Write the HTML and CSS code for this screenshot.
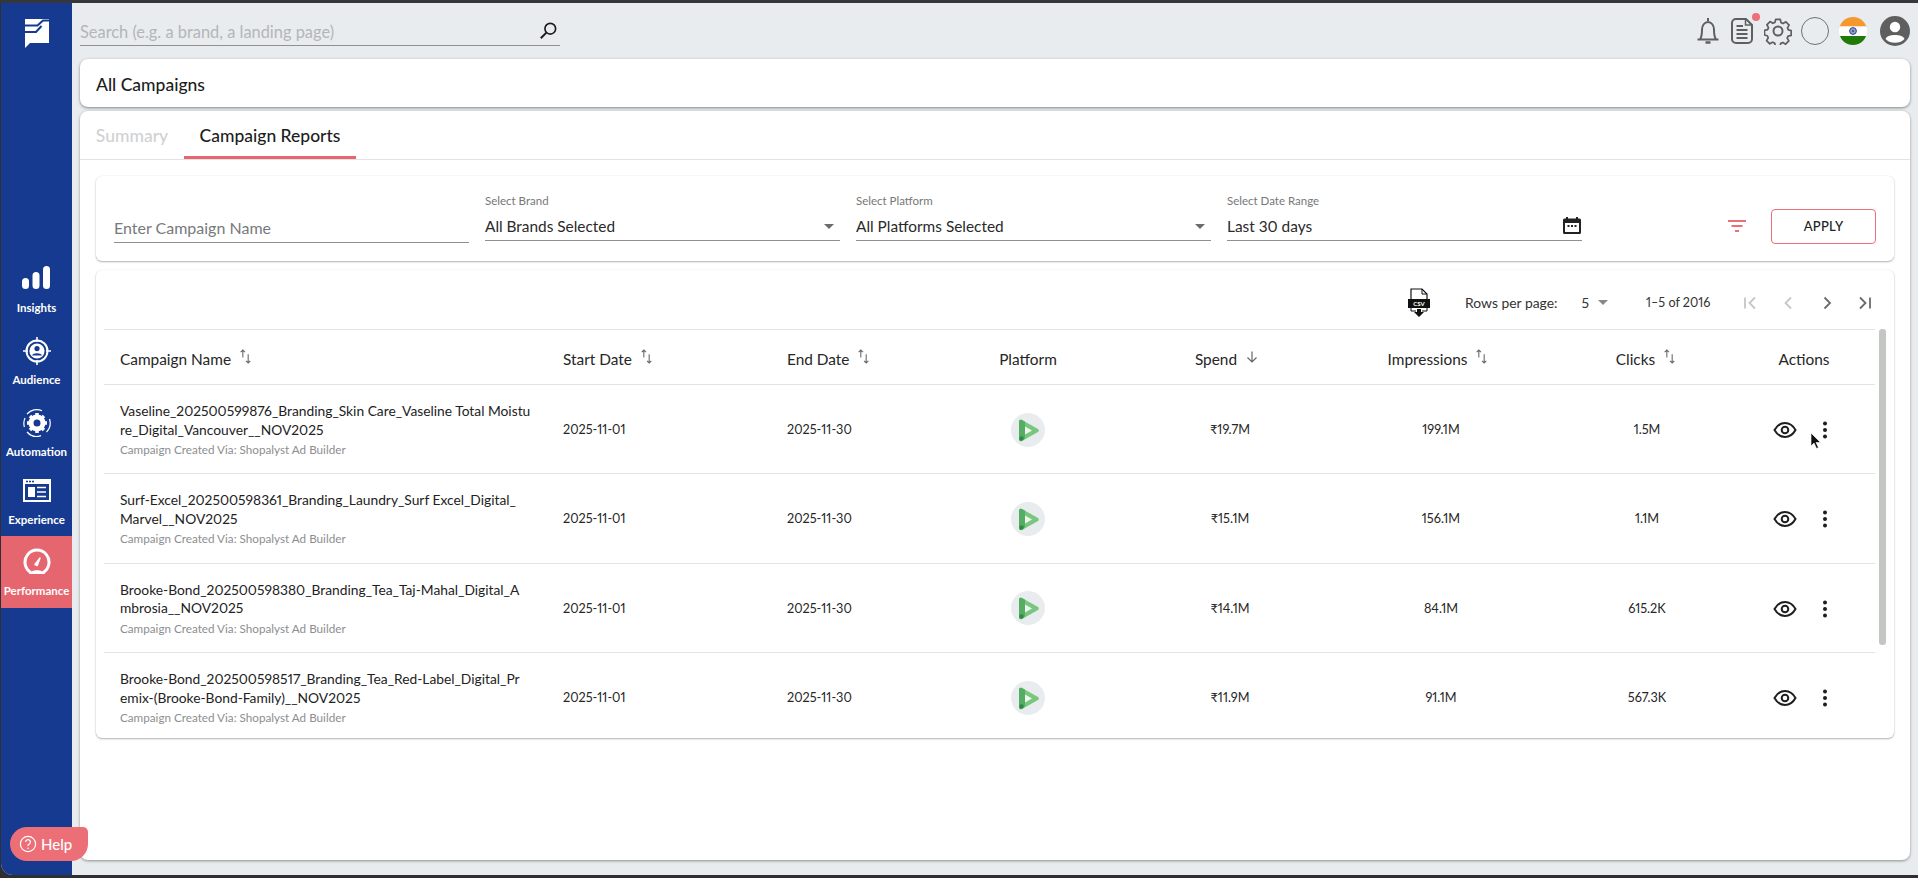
FILE: index.html
```html
<!DOCTYPE html>
<html lang="en">
<head>
<meta charset="utf-8">
<title>All Campaigns</title>
<link rel="stylesheet" href="styles.css">
</head>
<body>
<div class="titlebar"></div>
<div class="app">
  <aside class="sidebar">
    <svg class="logo" viewBox="0 0 24 29" width="24" height="29"><path fill="#fff" d="M0 0H24V24H5L0 29Z"/><path fill="none" stroke="#163a8f" stroke-width="2" d="M0 6.500H12.500L18 1.500H24M0 13H11L16.500 7"/></svg>
    <nav class="nav">
      <a class="nav-item ins">
        <svg viewBox="0 0 30 26" width="30" height="26"><rect x="1" y="12" width="7" height="11" rx="3.5" fill="#fff"/><rect x="11.5" y="6" width="7" height="17" rx="3.5" fill="#fff"/><rect x="22" y="0" width="7" height="23" rx="3.5" fill="#fff"/></svg>
        <span>Insights</span>
      </a>
      <a class="nav-item">
        <svg viewBox="0 0 28 28" width="28" height="28" fill="none" stroke="#fff"><circle cx="14" cy="14" r="10.5" stroke-width="2"/><circle cx="14" cy="14" r="7.6" fill="#fff" stroke="none"/><circle cx="14" cy="11.6" r="2.6" fill="#163a8f" stroke="none"/><path d="M9 18.5c1-3 9-3 10 0z" fill="#163a8f" stroke="none"/><path d="M14 0v5M14 23v5M0 14h5M23 14h5" stroke-width="1.6"/></svg>
        <span>Audience</span>
      </a>
      <a class="nav-item">
        <svg viewBox="0 0 30 30" width="30" height="30" fill="none" stroke="#fff"><path d="M5 6A13 13 0 0 1 20 2.8M27.5 11A13 13 0 0 1 24.500 24M19 27.600A13 13 0 0 1 5 24M2.400 19A13 13 0 0 1 3 10" stroke-width="1.200"/><circle cx="15" cy="15" r="6" stroke-width="5"/><path d="M15 5v4M15 21v4M5 15h4M21 15h4M8 8l3 3M19 19l3 3M22 8l-3 3M8 22l3-3" stroke-width="3.400"/></svg>
        <span>Automation</span>
      </a>
      <a class="nav-item short">
        <svg viewBox="0 0 28 24" width="28" height="24"><path fill="#fff" fill-rule="evenodd" d="M0 0H28V23H0ZM2 5V21H26V5Z"/><rect x="5" y="8" width="7" height="10" fill="#fff"/><path d="M14 8.500H23M14 13H23M14 17.500H23" stroke="#fff" stroke-width="1.500"/><path d="M3 2.500H5M6 2.500H8M9 2.500H11" stroke="#163a8f" stroke-width="1.500"/></svg>
        <span>Experience</span>
      </a>
      <a class="nav-item active">
        <svg viewBox="0 0 28 28" width="28" height="28" fill="none"><path d="M8 24.500A12 12 0 1 1 20 24.500" stroke="#fff" stroke-width="3"/><path d="M6 26c2-5 14-5 16 0z" fill="#fff"/><path d="M12 16.500l5-6.500-2.800 7.500z" fill="#fff" stroke="#fff" stroke-width="1.500" stroke-linejoin="round"/></svg>
        <span>Performance</span>
      </a>
    </nav>
  </aside>
  <main class="main">
    <header class="topbar">
      <div class="search">
        <span class="search-text">Search (e.g. a brand, a landing page)</span>
        <svg viewBox="0 0 16 16" width="19" height="19" fill="none" stroke="#1b1b1b"><circle cx="9.500" cy="6.500" r="4.500" stroke-width="1.400"/><path d="M6.200 9.800L1.500 14.500" stroke-width="1.700"/></svg>
      </div>
      <div class="top-icons">
        <svg class="ic-bell" viewBox="0 0 24 28" width="24" height="28" fill="none" stroke="#5f5f5f" stroke-width="2"><path d="M1.500 22.500h21M4 22.500c2-3 2-5 2-10 0-4 2.500-7.500 6-7.500s6 3.500 6 7.500c0 5 0 7 2 10"/><path d="M12 1v3"/><path d="M9.500 25.500h5" stroke-width="2.400"/></svg>
        <span class="doc-wrap">
          <svg viewBox="0 0 22 26" width="22" height="26" fill="none" stroke="#5f5f5f" stroke-width="2"><path d="M5 1h10l6 6v14a4 4 0 0 1-4 4H5a4 4 0 0 1-4-4V5a4 4 0 0 1 4-4z"/><path d="M5.500 8H12M5.500 12h11M5.500 16h11M5.500 20h11" stroke-width="1.800"/><path d="M14.500 1.500V7H20" stroke-width="1.500"/></svg>
          <i class="dot"></i>
        </span>
        <svg class="gear" viewBox="0 0 28 28" width="28" height="28" fill="none" stroke="#5f5f5f"><circle cx="14" cy="14" r="4.500" stroke-width="2"/><path stroke-width="1.900" stroke-linejoin="round" d="M11.500 1.500h5l.8 3.400 2.300 1 3-1.800 3.500 3.500-1.800 3 1 2.300 3.100.8v5l-3.400.8-1 2.300 1.800 3-3.500 3.500-3-1.800-2.300 1-.8 3.100h-5l-.8-3.400-2.300-1-3 1.800-3.500-3.500 1.800-3-1-2.300-3.100-.8v-5l3.400-.8 1-2.300-1.800-3 3.500-3.500 3 1.800 2.300-1z" transform="translate(1.100 1.100) scale(.92)"/></svg>
        <span class="lang-empty"></span>
        <svg class="flag" viewBox="0 0 28 28" width="28" height="28"><clipPath id="fc"><circle cx="14" cy="14" r="14"/></clipPath><g clip-path="url(#fc)"><rect width="28" height="9.500" fill="#f7982f"/><rect y="9.500" width="28" height="9.500" fill="#fff"/><rect y="19" width="28" height="9" fill="#1f7a0a"/></g><circle cx="14" cy="14" r="3.400" fill="#8ea0c8" stroke="#2d4a8f" stroke-width="1"/><circle cx="14" cy="14" r="1" fill="#2d4a8f"/></svg>
        <svg class="avatar" viewBox="0 0 30 30" width="30" height="30"><circle cx="15" cy="15" r="15" fill="#5f5f5f"/><circle cx="15" cy="11" r="5.200" fill="#fff"/><path d="M5.500 23c1.500-5.500 17.500-5.500 19 0-2.500 2.800-6 3.800-9.500 3.800s-7-1-9.500-3.800z" fill="#fff"/></svg>
      </div>
    </header>

    <section class="title-card">All Campaigns</section>

    <section class="content-card">
      <div class="tabs">
        <span class="tab muted">Summary</span>
        <span class="tab current">Campaign Reports</span>
      </div>

      <div class="filters">
        <div class="field plain"><span class="placeholder">Enter Campaign Name</span></div>
        <div class="field">
          <label>Select Brand</label>
          <div class="value">All Brands Selected<i class="caret"></i></div>
        </div>
        <div class="field">
          <label>Select Platform</label>
          <div class="value">All Platforms Selected<i class="caret"></i></div>
        </div>
        <div class="field">
          <label>Select Date Range</label>
          <div class="value">Last 30 days
            <svg viewBox="0 0 18 18" width="18" height="18"><path fill="#222" fill-rule="evenodd" d="M3 1h2v1.500h8V1h2v1.500h1.500A1.500 1.500 0 0 1 18 4v12.500a1.500 1.500 0 0 1-1.500 1.500h-15A1.500 1.500 0 0 1 0 16.500V4a1.500 1.500 0 0 1 1.500-1.500H3ZM2 7v9h14V7Z"/><path fill="#222" d="M4.500 9h2v2h-2zM8 9h2v2H8zM11.500 9h2v2h-2z"/></svg>
          </div>
        </div>
        <div class="filter-actions">
          <svg viewBox="0 0 18 12" width="18" height="12"><path d="M0 1h18M3.500 6h11M7 11h4" stroke="#ec6f78" stroke-width="2"/></svg>
          <button class="apply">APPLY</button>
        </div>
      </div>

      <div class="table-card">
        <div class="pager">
          <svg class="csv" viewBox="0 0 22 30" width="22" height="30"><path d="M3 12V1h11l5 5v6" fill="#fff" stroke="#111" stroke-width="1.200"/><path d="M14 1v5h5" fill="none" stroke="#111" stroke-width="1"/><rect x="0" y="11" width="22" height="9" fill="#111"/><text x="11" y="18" class="csv-text">CSV</text><path d="M3 20v3h5M19 20v3h-5" fill="none" stroke="#111" stroke-width="1"/><path d="M9 21h4v3h3l-5 5-5-5h3z" fill="#111"/></svg>
          <span class="rows-label">Rows per page:</span>
          <span class="rows-value">5</span><i class="caret grey"></i>
          <span class="range">1–5 of 2016</span>
          <span class="pg-btns">
            <svg viewBox="0 0 24 24" width="24" height="24" fill="none" stroke="#c4c6c8" stroke-width="1.800"><path d="M7 6.500v11M17 6.500L11.500 12l5.500 5.500"/></svg>
            <svg viewBox="0 0 24 24" width="24" height="24" fill="none" stroke="#c4c6c8" stroke-width="1.800"><path d="M15 6.500L9.500 12l5.500 5.500"/></svg>
            <svg viewBox="0 0 24 24" width="24" height="24" fill="none" stroke="#6b6b6b" stroke-width="1.800"><path d="M9.500 6.500L15 12l-5.500 5.500"/></svg>
            <svg viewBox="0 0 24 24" width="24" height="24" fill="none" stroke="#6b6b6b" stroke-width="1.800"><path d="M17 6.500v11M7 6.500l5.500 5.500L7 17.500"/></svg>
          </span>
        </div>
        <div class="table-wrap">
          <table class="report">
            <colgroup><col class="c-name"><col class="c-start"><col class="c-end"><col class="c-plat"><col class="c-spend"><col class="c-imp"><col class="c-clicks"><col class="c-act"></colgroup>
            <thead>
              <tr>
                <th class="left">Campaign Name<svg class="sort" viewBox="0 0 12 14" width="13" height="15"><use href="#sort-icon"/></svg></th>
                <th class="left">Start Date<svg class="sort" viewBox="0 0 12 14" width="13" height="15"><use href="#sort-icon"/></svg></th>
                <th class="left">End Date<svg class="sort" viewBox="0 0 12 14" width="13" height="15"><use href="#sort-icon"/></svg></th>
                <th>Platform</th>
                <th class="h-spend">Spend<svg class="sort down" viewBox="0 0 14 14" width="14" height="14" fill="none" stroke="#666" stroke-width="1.200"><path d="M7 1.500v10M2.500 7.500l4.500 4.500 4.500-4.500"/></svg></th>
                <th class="h-imp">Impressions<svg class="sort" viewBox="0 0 12 14" width="13" height="15"><use href="#sort-icon"/></svg></th>
                <th class="h-clicks">Clicks<svg class="sort" viewBox="0 0 12 14" width="13" height="15"><use href="#sort-icon"/></svg></th>
                <th class="h-act">Actions</th>
              </tr>
            </thead>
            <tbody>
              <tr>
                <td class="left"><div class="cname">Vaseline_202500599876_Branding_Skin Care_Vaseline Total Moistu<br>re_Digital_Vancouver__NOV2025</div><div class="via">Campaign Created Via: Shopalyst Ad Builder</div></td>
                <td class="left">2025-11-01</td><td class="left">2025-11-30</td>
                <td><svg class="plat" viewBox="0 0 34 34" width="34" height="34"><use href="#dv360"/></svg></td>
                <td>₹19.7M</td><td>199.1M</td><td>1.5M</td>
                <td class="d-act"><span class="acts"><svg viewBox="0 0 24 24" width="24" height="24"><use href="#eye"/></svg><svg viewBox="0 0 24 24" width="24" height="24"><use href="#dots"/></svg></span></td>
              </tr>
              <tr>
                <td class="left"><div class="cname">Surf-Excel_202500598361_Branding_Laundry_Surf Excel_Digital_<br>Marvel__NOV2025</div><div class="via">Campaign Created Via: Shopalyst Ad Builder</div></td>
                <td class="left">2025-11-01</td><td class="left">2025-11-30</td>
                <td><svg class="plat" viewBox="0 0 34 34" width="34" height="34"><use href="#dv360"/></svg></td>
                <td>₹15.1M</td><td>156.1M</td><td>1.1M</td>
                <td class="d-act"><span class="acts"><svg viewBox="0 0 24 24" width="24" height="24"><use href="#eye"/></svg><svg viewBox="0 0 24 24" width="24" height="24"><use href="#dots"/></svg></span></td>
              </tr>
              <tr>
                <td class="left"><div class="cname">Brooke-Bond_202500598380_Branding_Tea_Taj-Mahal_Digital_A<br>mbrosia__NOV2025</div><div class="via">Campaign Created Via: Shopalyst Ad Builder</div></td>
                <td class="left">2025-11-01</td><td class="left">2025-11-30</td>
                <td><svg class="plat" viewBox="0 0 34 34" width="34" height="34"><use href="#dv360"/></svg></td>
                <td>₹14.1M</td><td>84.1M</td><td>615.2K</td>
                <td class="d-act"><span class="acts"><svg viewBox="0 0 24 24" width="24" height="24"><use href="#eye"/></svg><svg viewBox="0 0 24 24" width="24" height="24"><use href="#dots"/></svg></span></td>
              </tr>
              <tr>
                <td class="left"><div class="cname">Brooke-Bond_202500598517_Branding_Tea_Red-Label_Digital_Pr<br>emix-(Brooke-Bond-Family)__NOV2025</div><div class="via">Campaign Created Via: Shopalyst Ad Builder</div></td>
                <td class="left">2025-11-01</td><td class="left">2025-11-30</td>
                <td><svg class="plat" viewBox="0 0 34 34" width="34" height="34"><use href="#dv360"/></svg></td>
                <td>₹11.9M</td><td>91.1M</td><td>567.3K</td>
                <td class="d-act"><span class="acts"><svg viewBox="0 0 24 24" width="24" height="24"><use href="#eye"/></svg><svg viewBox="0 0 24 24" width="24" height="24"><use href="#dots"/></svg></span></td>
              </tr>
            </tbody>
          </table>
          <div class="scroll-thumb"></div>
        </div>
      </div>
    </section>
  </main>
</div>

<button class="help">
  <svg viewBox="0 0 18 18" width="18" height="18" fill="none" stroke="#fff"><circle cx="9" cy="9" r="7.600" stroke-width="1.200"/><path d="M6.600 7a2.400 2.400 0 1 1 3.600 2.100c-.8.500-1.200.9-1.200 1.900" stroke-width="1.200"/><circle cx="9" cy="13.200" r=".8" fill="#fff" stroke="none"/></svg>
  Help
</button>
<svg class="cursor" viewBox="0 0 12 18" width="12" height="18"><path d="M1 1v13l3-3 2.500 5.500 2-1L6 10.500h4.500z" fill="#111" stroke="#fff" stroke-width=".6"/></svg>

<svg class="defs" width="0" height="0">
  <defs>
    <g id="sort-icon" fill="none" stroke="#666" stroke-width="1"><path d="M3.500 1v7M1.500 3l2-2 2 2"/><path d="M8.500 5v8M6.500 11l2 2 2-2"/></g>
    <g id="dv360"><circle cx="17" cy="17" r="17" fill="#e9ecee"/><path d="M8 8.500c0-1.500 1.500-2.200 3-1.500l16 9c1.200.8 1.200 2.200 0 3l-16 9c-1.500.7-3 0-3-1.500z" fill="#79c77f"/><path d="M14 13.500v8l7-4z" fill="#f1f5f1"/><path d="M8 8.500c0-1.500 1.500-2.200 3-1.500l3 1.700v16.500l-3 2.300c-1.500.7-3 0-3-1.500z" fill="#54ad62"/><circle cx="10.500" cy="25.500" r="2.200" fill="#2e8a46"/></g>
    <g id="eye" fill="none" stroke="#1e1e1e" stroke-width="2"><path d="M1.500 12C4 7.500 7.800 5 12 5s8 2.500 10.500 7c-2.500 4.500-6.300 7-10.500 7s-8-2.500-10.500-7z"/><circle cx="12" cy="12" r="3.300"/></g>
    <g id="dots" fill="#1e1e1e"><circle cx="12" cy="5.500" r="2"/><circle cx="12" cy="12" r="2"/><circle cx="12" cy="18.500" r="2"/></g>
  </defs>
</svg>
</body>
</html>
```
FILE: styles.css
```css
* { box-sizing: border-box; }
html, body { margin: 0; padding: 0; height: 100%; overflow: hidden; }
body {
  background: #2d2f33;
  font-family: "Lato", "Noto Sans", sans-serif;
  font-variant-numeric: proportional-nums;
  color: #1d1d1d;
  position: relative;
}
.titlebar { height: 3px; background: #35373b; }
.app {
  display: flex;
  height: 872px;
  margin-left: 1px;
  background: #e9ecee;
  border-radius: 0 0 0 12px;
  overflow: hidden;
}
.sidebar {
  width: 71px;
  flex: none;
  background: #163a8f;
  display: flex;
  flex-direction: column;
  align-items: center;
  padding-top: 16px;
}
.logo { margin-left: 1px; }
.nav { margin-top: 216px; width: 100%; display: flex; flex-direction: column; }
.nav-item {
  height: 72px;
  display: flex;
  flex-direction: column;
  align-items: center;
  justify-content: flex-start;
  color: #fff;
  font-size: 11.500px;
  font-weight: 700;
  gap: 7px;
  padding-top: 0;
}
.nav-item svg { height: 30px; flex: none; }
.nav-item.ins svg { margin-left: -2px; }
.nav-item.short { height: 60px; margin-top: -4px; }
.nav-item.active { background: #e5666e; height: 72px; padding-top: 11px; }
.main {
  flex: 1;
  min-width: 0;
  padding: 0 8px 0 8px;
  display: flex;
  flex-direction: column;
}
.topbar {
  height: 56px;
  flex: none;
  display: flex;
  justify-content: space-between;
  align-items: flex-start;
}
.search {
  width: 480px;
  height: 43px;
  border-bottom: 1px solid #8f9193;
  display: flex;
  align-items: center;
  justify-content: space-between;
  padding: 16px 0 0;
  margin-top: 0;
}
.search svg { margin: -3px 2px 0 0; }
.search-text { font-size: 16.400px; line-height: 20px; color: #b3b6b8; }
.top-icons { display: flex; align-items: center; gap: 10px; margin-top: 13px; padding-right: 0; }
.top-icons > svg, .doc-wrap { flex: none; }
.doc-wrap { position: relative; display: block; height: 26px; width: 22px; margin-left: 1px; }
.gear { margin: 0 -1px 0 1px; }
.avatar { margin-left: 3px; }
.dot { position: absolute; right: -7px; top: -5px; width: 8px; height: 8px; border-radius: 50%; background: #ee6e78; }
.lang-empty { width: 28px; height: 28px; border: 1px solid #6f7173; border-radius: 50%; }
.title-card {
  height: 48px;
  flex: none;
  background: #fff;
  border-radius: 8px;
  box-shadow: 0 1px 3px rgba(0,0,0,.45);
  font-size: 17.500px;
  font-weight: 500;
  display: flex;
  align-items: center;
  padding: 2px 0 0 16px;
}
.content-card {
  margin-top: 4px;
  height: 749px;
  flex: none;
  background: #fff;
  border-radius: 8px 8px 8px 8px;
  box-shadow: 0 1px 3px rgba(0,0,0,.4);
  padding: 0 16px;
  position: relative;
}
.tabs {
  height: 49px;
  margin: 0 -16px;
  padding-left: 0;
  display: flex;
  border-bottom: 1px solid #e2e3e5;
}
.tab {
  width: 104px;
  display: flex;
  align-items: center;
  justify-content: center;
  font-size: 17.500px;
  font-weight: 500;
}
.tab.muted { color: #cfd1d3; }
.tab.current { width: 172px; border-bottom: 3px solid #e5666e; padding-top: 3px; }
.filters {
  margin-top: 16px;
  height: 85px;
  border-radius: 6px;
  box-shadow: 0 1px 2px rgba(0,0,0,.3), 0 0 1px rgba(0,0,0,.12);
  padding: 0 18px 0 18px;
  display: grid;
  grid-template-columns: repeat(4, 355px) 1fr;
  column-gap: 16px;
  align-items: end;
}
.field { height: 55px; margin-bottom: 20px; display: flex; flex-direction: column; justify-content: flex-end; border-bottom: 1px solid #8f9193; }
.field label { font-size: 11.500px; line-height: 14px; color: #777; margin-bottom: 8px; }
.field.plain { margin-bottom: 18px; }
.placeholder { font-size: 16px; line-height: 20px; color: #77797b; padding-bottom: 4px; }
.value {
  font-size: 15.400px;
  line-height: 20px;
  color: #2a2a2a;
  height: 24px;
  display: flex;
  justify-content: space-between;
  align-items: flex-start;
}
.caret {
  width: 0; height: 0;
  border-left: 5.500px solid transparent;
  border-right: 5.500px solid transparent;
  border-top: 5px solid #6c6c6c;
  margin: 8px 6px 0 0;
}
.value svg { margin: 0 1px 0 0; }
.filter-actions { display: flex; align-items: center; justify-content: flex-end; gap: 25px; height: 85px; padding-top: 15px; }
.filter-actions svg { flex: none; }
.apply {
  width: 105px;
  height: 35px;
  background: #fff;
  border: 1px solid #ec6f78;
  border-radius: 4px;
  font: 500 13px "Lato", sans-serif;
  color: #222;
  letter-spacing: .3px;
}
.table-card {
  margin-top: 9px;
  height: 468px;
  border-radius: 6px;
  box-shadow: 0 1px 2px rgba(0,0,0,.3), 0 0 1px rgba(0,0,0,.12);
  padding: 0 8px;
  overflow: hidden;
}
.pager {
  height: 59px;
  display: flex;
  align-items: center;
  font-size: 13.900px;
  color: #333;
  padding-top: 6px;
}
.csv { margin-left: 1304px; }
.csv-text { font: 700 6px "Lato", sans-serif; fill: #fff; text-anchor: middle; }
.rows-label { margin-left: 35px; }
.rows-value { margin-left: 24px; }
.pager .caret.grey { margin: 0 0 0 9px; border-top-color: #888; }
.range { margin-left: 38px; font-size: 12.600px; }
.pg-btns { display: flex; gap: 14.500px; margin-left: 27.500px; }
.table-wrap { position: relative; height: 409px; overflow: hidden; }
.report {
  width: 1771px;
  table-layout: fixed;
  border-collapse: collapse;
  border-top: 1px solid #e2e3e5;
}
.c-name { width: 443px; } .c-start { width: 224px; } .c-end { width: 154px; } .c-plat { width: 206px; }
.c-spend { width: 198px; } .c-imp { width: 224px; } .c-clicks { width: 188px; } .c-act { width: 134px; }
.report th {
  height: 55px;
  font-size: 15.400px;
  font-weight: 400;
  color: #262626;
  text-align: center;
  padding: 3px 0 0;
  border-bottom: 1px solid #e2e3e5;
}
.report th.left, .report td.left { text-align: left; padding-left: 16px; }
.report th.h-spend, .report th.h-imp { padding-right: 6px; }
.report th.h-clicks { padding-right: 2px; }
.report th.h-act, .report td.d-act { padding-right: 8px; }
.sort { margin-left: 8px; vertical-align: 1px; }
.report td {
  height: 89.300px;
  font-size: 12.700px;
  color: #262626;
  text-align: center;
  padding: 0;
  border-bottom: 1px solid #e2e3e5;
}
.cname { line-height: 18.500px; font-size: 13.800px; color: #222; padding-top: 1px; }
.via { font-size: 11.700px; color: #8c8e90; margin-top: 2px; line-height: 16px; }
.plat { display: block; margin: 1px auto 0; }
.acts { display: inline-flex; gap: 16px; align-items: center; vertical-align: middle; margin: 2px 0 0 2px; }
.scroll-thumb { position: absolute; right: 0; top: 0; width: 7px; height: 316px; background: #c4c6c4; border-radius: 3px; }
.help {
  position: absolute;
  left: 10px;
  top: 827px;
  width: 78px;
  height: 34px;
  background: #ec6f78;
  border: 0;
  border-radius: 17px 5px 17px 17px;
  color: #fff;
  font: 500 15px "Lato", sans-serif;
  display: flex;
  align-items: center;
  gap: 4px;
  padding: 0 0 0 9px;
}
.cursor { position: absolute; left: 1810px; top: 432px; }
.defs { position: absolute; }
```
